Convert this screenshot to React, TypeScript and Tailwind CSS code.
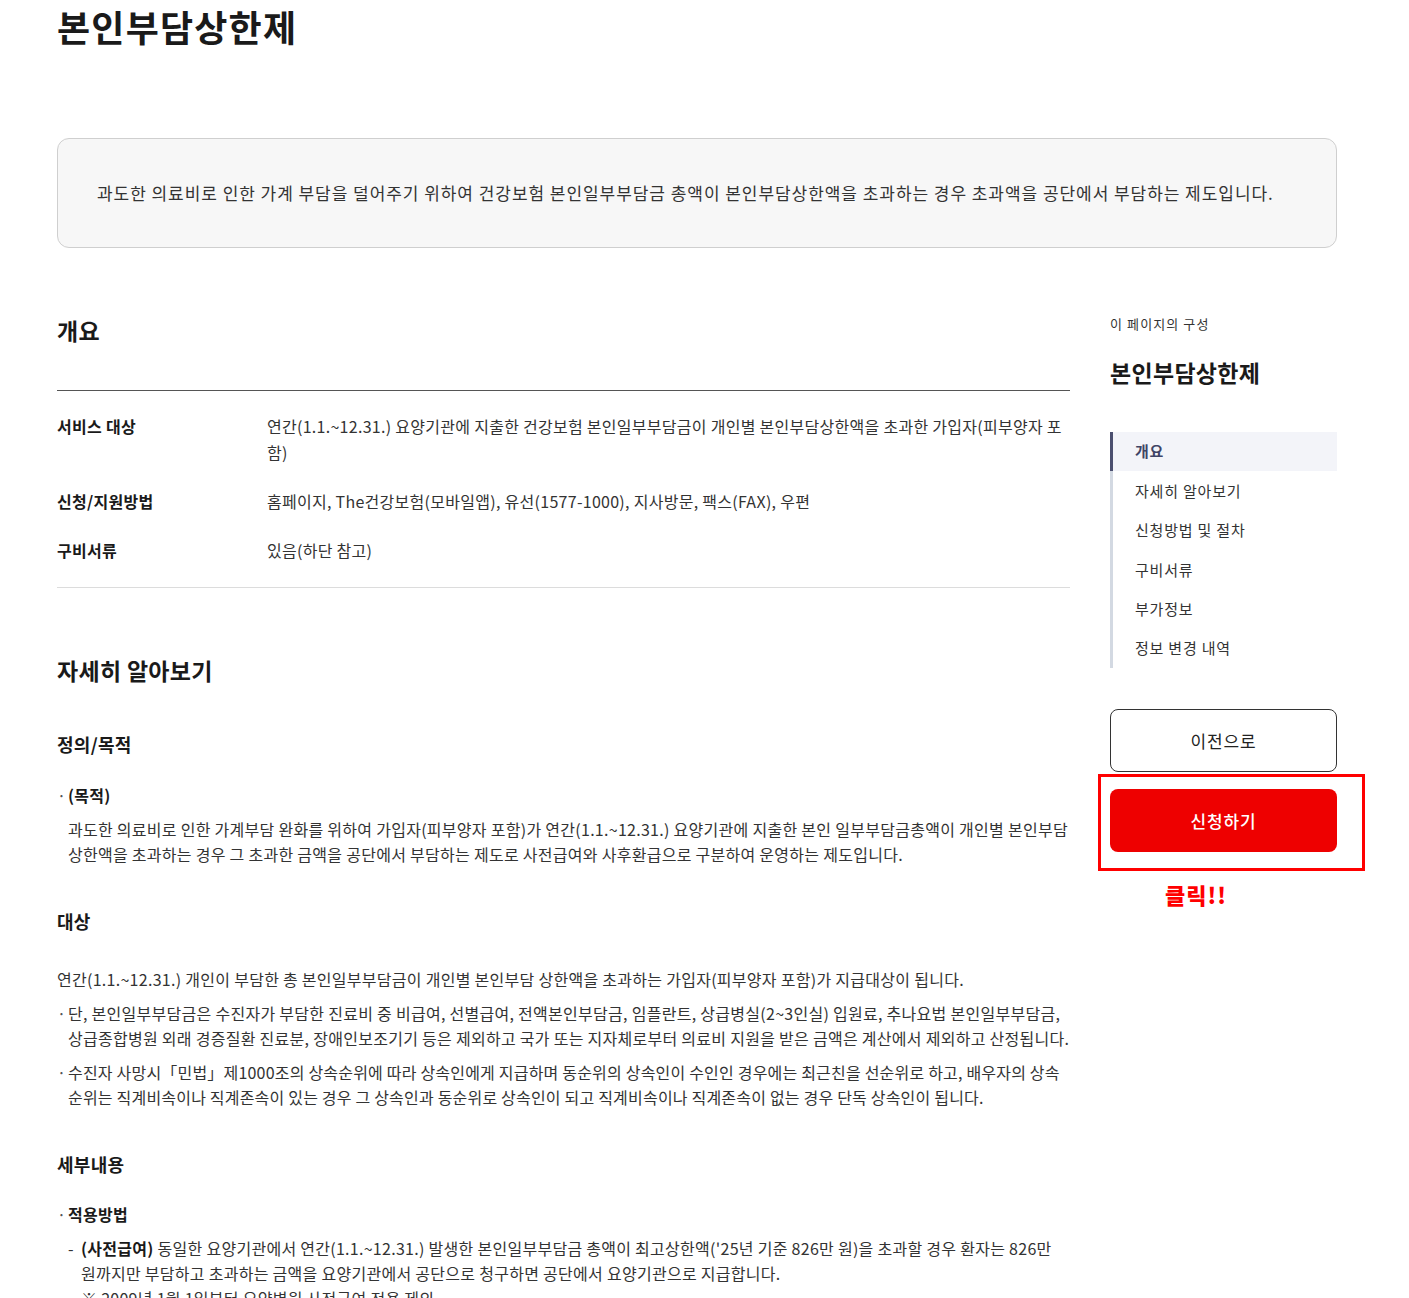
const FONT = "font-['Noto_Sans_CJK_KR','Noto_Sans',sans-serif]";

type NavItem = { label: string; active?: boolean };

const navItems: NavItem[] = [
  { label: "개요", active: true },
  { label: "자세히 알아보기" },
  { label: "신청방법 및 절차" },
  { label: "구비서류" },
  { label: "부가정보" },
  { label: "정보 변경 내역" },
];

const summaryRows = [
  {
    label: "서비스 대상",
    value:
      "연간(1.1.~12.31.) 요양기관에 지출한 건강보험 본인일부부담금이 개인별 본인부담상한액을 초과한 가입자(피부양자 포함)",
  },
  {
    label: "신청/지원방법",
    value: "홈페이지, The건강보험(모바일앱), 유선(1577-1000), 지사방문, 팩스(FAX), 우편",
  },
  { label: "구비서류", value: "있음(하단 참고)" },
];

function Dot({ children, className = "" }: { children: React.ReactNode; className?: string }) {
  return (
    <div className={`flex ${className}`}>
      <span className="w-[11px] shrink-0 text-[#555]">·</span>
      <div className="flex-1">{children}</div>
    </div>
  );
}

function Sidebar() {
  return (
    <aside className="w-[227px] shrink-0">
      <p className="text-[13px] leading-[20px] tracking-[1.1px] text-[#333]">이 페이지의 구성</p>
      <h3 className="mt-[22px] text-[23px] leading-[32px] font-bold tracking-[0.3px] text-[#1a1a1a]">
        본인부담상한제
      </h3>
      <ul className="mt-[44px] border-l-[3px] border-[#d3d9e2] tracking-[0.8px]">
        {navItems.map((item) => (
          <li
            key={item.label}
            className={
              item.active
                ? "-ml-[3px] flex h-[39.4px] items-center border-l-[3px] border-[#4b4f6f] bg-[#f3f4f9] pl-[22px] text-[15px] font-semibold text-[#3f4466]"
                : "flex h-[39.4px] items-center pl-[22px] text-[15px] text-[#333]"
            }
          >
            {item.label}
          </li>
        ))}
      </ul>
      <button className="mt-[41px] flex h-[63px] w-full items-center justify-center rounded-[8px] border border-[#333] bg-white text-[17px] tracking-[0.8px] text-[#222]">
        이전으로
      </button>
      <div className="-ml-[12px] -mr-[28px] mt-[2px] border-[3px] border-[#ff0000] pb-[16px] pl-[9px] pr-[25px] pt-[12px]">
        <button className="flex h-[63px] w-full items-center justify-center rounded-[8px] bg-[#ee0000] text-[17px] font-medium tracking-[0.8px] text-white">
          신청하기
        </button>
      </div>
      <p className="mt-[9px] pl-[55px] text-[22px] leading-[28px] font-extrabold tracking-[1px] text-[#ff0000]">
        클릭!!
      </p>
    </aside>
  );
}

export default function App() {
  return (
    <div className={`min-h-[1298px] bg-white text-[#222] ${FONT}`}>
      <div className="ml-[57px] w-[1280px]">
        <h1 className="pt-[3px] text-[36px] leading-[46px] font-bold tracking-[1.2px] text-[#1a1a1a]">
          본인부담상한제
        </h1>

        <div className="mt-[89px] flex h-[110px] items-center rounded-[12px] border border-[#cfcfcf] bg-[#f7f7f7] px-[39px]">
          <p className="text-[17px] leading-[26px] tracking-[0.95px] text-[#333]">
            과도한 의료비로 인한 가계 부담을 덜어주기 위하여 건강보험 본인일부부담금 총액이 본인부담상한액을 초과하는 경우 초과액을 공단에서 부담하는 제도입니다.
          </p>
        </div>

        <div className="mt-[66px] flex gap-[40px]">
          <main className="w-[1013px] shrink-0 text-[16px] leading-[25px] tracking-[0.28px] text-[#333]">
            <h2 className="text-[23px] leading-[32px] font-bold tracking-[0.3px] text-[#1a1a1a]">개요</h2>
            <div className="mt-[44px] border-y border-t-[#555] border-b-[#dcdcdc] pb-[24px] pt-[22px]">
              <div className="flex flex-col gap-y-[23px]">
                {summaryRows.map((row) => (
                  <div key={row.label} className="flex leading-[26px]">
                    <div className="w-[210px] shrink-0 font-bold text-[#1a1a1a]">{row.label}</div>
                    <div className="flex-1">{row.value}</div>
                  </div>
                ))}
              </div>
            </div>

            <h2 className="mt-[66px] text-[23px] leading-[32px] font-bold tracking-[0.3px] text-[#1a1a1a]">
              자세히 알아보기
            </h2>

            <h4 className="mt-[45px] text-[18px] leading-[26px] font-bold text-[#1a1a1a]">정의/목적</h4>
            <Dot className="mt-[26px]">
              <span className="font-bold text-[#1a1a1a]">(목적)</span>
            </Dot>
            <p className="mt-[9px] pl-[11px]">
              과도한 의료비로 인한 가계부담 완화를 위하여 가입자(피부양자 포함)가 연간(1.1.~12.31.) 요양기관에 지출한 본인 일부부담금총액이 개인별 본인부담 상한액을 초과하는 경우 그 초과한 금액을 공단에서 부담하는 제도로 사전급여와 사후환급으로 구분하여 운영하는 제도입니다.
            </p>

            <h4 className="mt-[41px] text-[18px] leading-[26px] font-bold text-[#1a1a1a]">대상</h4>
            <p className="mt-[33px]">
              연간(1.1.~12.31.) 개인이 부담한 총 본인일부부담금이 개인별 본인부담 상한액을 초과하는 가입자(피부양자 포함)가 지급대상이 됩니다.
            </p>
            <Dot className="mt-[9px]">
              단, 본인일부부담금은 수진자가 부담한 진료비 중 비급여, 선별급여, 전액본인부담금, 임플란트, 상급병실(2~3인실) 입원료, 추나요법 본인일부부담금, 상급종합병원 외래 경증질환 진료분, 장애인보조기기 등은 제외하고 국가 또는 지자체로부터 의료비 지원을 받은 금액은 계산에서 제외하고 산정됩니다.
            </Dot>
            <Dot className="mt-[9px] tracking-[0.2px]">
              수진자 사망시「민법」제1000조의 상속순위에 따라 상속인에게 지급하며 동순위의 상속인이 수인인 경우에는 최근친을 선순위로 하고, 배우자의 상속순위는 직계비속이나 직계존속이 있는 경우 그 상속인과 동순위로 상속인이 되고 직계비속이나 직계존속이 없는 경우 단독 상속인이 됩니다.
            </Dot>

            <h4 className="mt-[41px] text-[18px] leading-[26px] font-bold text-[#1a1a1a]">세부내용</h4>
            <Dot className="mt-[25px]">
              <span className="font-bold text-[#1a1a1a]">적용방법</span>
            </Dot>
            <div className="mt-[9px] flex pl-[11px]">
              <span className="w-[13px] shrink-0">-</span>
              <div className="flex-1">
                <p>
                  <span className="font-bold text-[#1a1a1a]">(사전급여)</span> 동일한 요양기관에서 연간(1.1.~12.31.) 발생한 본인일부부담금 총액이 최고상한액('25년 기준 826만 원)을 초과할 경우 환자는 826만 원까지만 부담하고 초과하는 금액을 요양기관에서 공단으로 청구하면 공단에서 요양기관으로 지급합니다.
                </p>
                <p>※ 2009년 1월 1일부터 요양병원 사전급여 적용 제외</p>
              </div>
            </div>
          </main>
          <Sidebar />
        </div>
      </div>
    </div>
  );
}
